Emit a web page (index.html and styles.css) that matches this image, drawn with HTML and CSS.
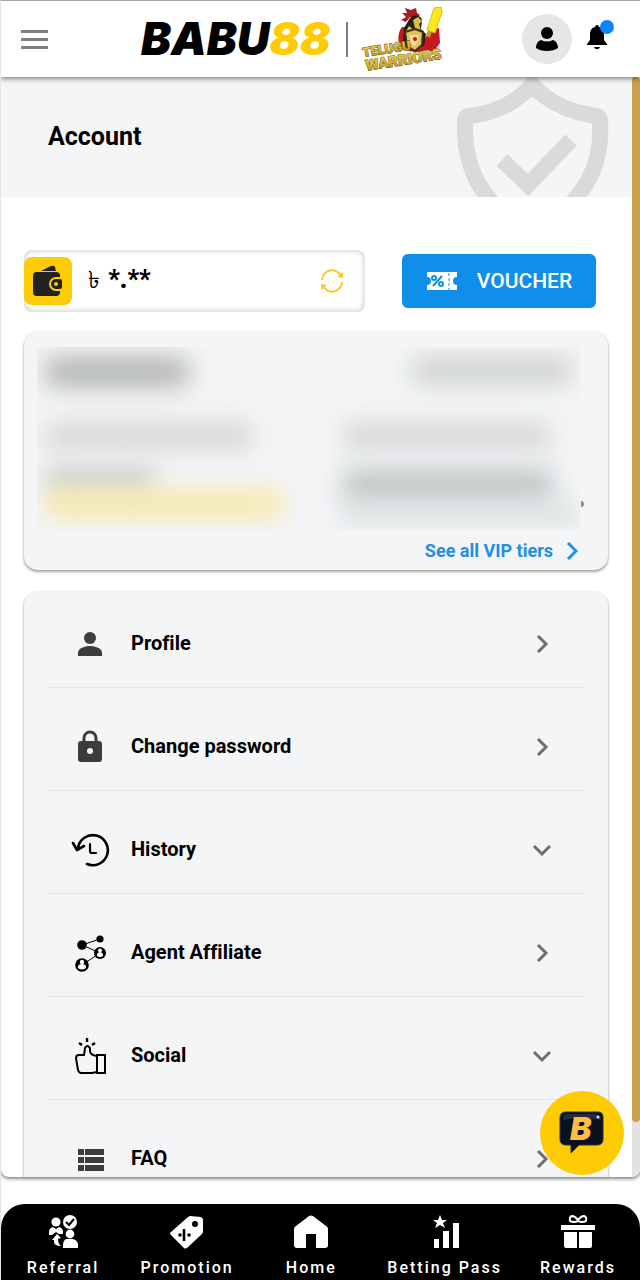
FILE: index.html
```
<!DOCTYPE html>
<html lang="en">
<head>
    <meta charset="UTF-8">
    <meta name="viewport" content="width=device-width, initial-scale=1.0">
    <title>BABU88 - Account</title>
    <link rel="stylesheet" href="styles.css">
</head>
<body>
    <div class="app">
        <header class="header">
            <button class="menu-btn" aria-label="Menu"><span></span><span></span><span></span></button>

            <a href="#" class="brand">
                <span class="brand-name">BABU<span>88</span></span>
                <span class="brand-line"></span>
                <svg class="warriors" width="92" height="70" viewBox="0 0 92 70">
                    <defs>
                        <linearGradient id="gold" x1="0" y1="0" x2="0" y2="1">
                            <stop offset="0" stop-color="#f3dc55"/>
                            <stop offset="1" stop-color="#b98a1c"/>
                        </linearGradient>
                    </defs>
                    <path d="M46 13 42 9l5 0-2-5 6 2 5-2 1 5 3 2-4 3-6-1-4 5-5-2z" fill="#a81c24"/>
                    <path d="M42 23c-5 6-5 17 1 23l12 2 19-1 6-8-1-15-7 2-7 8-5-10z" fill="#c51822"/>
                    <path d="M50 14c4-4 11-3 12 2l-1 9 5 5-2 12-14 4-7-8 1-14z" fill="#211b12"/>
                    <path d="m53 16 5-3 4 4-3 3 2 6-6-2zM49 22l5 4-8 1z" fill="#dfbd42"/>
                    <path d="m45 28 10-3 8 3-1 13-7 6-8-5z" fill="#e1c05d" stroke="#40310e" stroke-width="2"/>
                    <path d="m50 31 9 0-1 8-4 3-4-4z" fill="#f4df91"/>
                    <circle cx="55" cy="35" r="2" fill="#c51822"/>
                    <path d="m66 31 3-7 3 2-2 8z" fill="#c99a28"/>
                    <path d="m74 4 7-1 1 5-7 21-8-3z" fill="#f9e91e" stroke="#d4bd18"/>
                    <g transform="rotate(-9 5 64)" font-family="Roboto, sans-serif" font-weight="900" fill="url(#gold)" stroke="#6b551a" stroke-width="1" paint-order="stroke">
                        <text x="5" y="53" font-size="13">TELUGU</text>
                        <text x="6" y="67" font-size="15">WARRIORS</text>
                    </g>
                </svg>
            </a>

            <div class="header-actions">
                <button class="avatar" aria-label="My account">
                    <svg width="24" height="26" viewBox="0 0 24 26"><circle cx="12" cy="7" r="6"/><path d="M6 14c4 2 8 2 12 0 3 1 5 4 5 8-5 4-17 4-22 0 0-4 2-7 5-8z"/></svg>
                </button>
                <button class="bell" aria-label="Notifications">
                    <svg width="22" height="26" viewBox="0 0 22 26"><path d="M9 3a2 2 0 0 1 4 0c4 1 5 4 5 8v5l3 4v1H1v-1l3-4v-5c0-4 1-7 5-8zM8 23h6c-1 3-5 3-6 0z"/></svg>
                    <span class="bell-dot"></span>
                </button>
            </div>
        </header>

        <main class="main">
            <div class="content">
                <section class="banner">
                    <h1>Account</h1>
                    <svg class="shield" width="152" height="120" viewBox="0 0 152 120">
                        <path d="M75 8C60 25 38 36 12 39a4 4 0 0 0-4 4C6 88 20 122 75 160 130 122 146 88 143 43a4 4 0 0 0-4-4C112 35 92 26 75 8z" fill="none" stroke="#d9dadb" stroke-width="16"/>
                        <path d="m45 83 26 25 43-45" fill="none" stroke="#d9dadb" stroke-width="16"/>
                    </svg>
                </section>

                <section class="wallet-row">
                    <div class="wallet">
                        <span class="wallet-icon">
                            <svg width="32" height="32" viewBox="0 0 32 32">
                                <path d="M9 6 19 1q3-1 4 1l1 4z" fill="#222"/>
                                <rect x="1" y="7" width="27" height="24" rx="4" fill="#222"/>
                                <path d="M28 13h-4a6 6 0 0 0 0 12h4q3 0 3-3v-6q0-3-3-3z" fill="#222" stroke="#ffcb05" stroke-width="2"/>
                                <circle cx="24" cy="19" r="2" fill="#ffcb05"/>
                            </svg>
                        </span>
                        <span class="balance"><span class="currency">৳</span> *.**</span>
                        <button class="refresh" aria-label="Refresh balance">
                            <svg width="26" height="26" viewBox="0 0 26 26" fill="none" stroke="#f7cb2b" stroke-width="2"><path d="M3 12A10 10 0 0 1 22 8M23 14A10 10 0 0 1 4 18"/><path d="m24 4v6l-6-1zM2 22v-6l6 1z" fill="#f7cb2b" stroke="none"/></svg>
                        </button>
                    </div>
                    <button class="voucher">
                        <svg width="32" height="20" viewBox="0 0 32 20">
                            <path d="M1 1h30v5a4 4 0 0 0 0 8v5H1v-5a4 4 0 0 0 0-8z" fill="#fff"/>
                            <g fill="none" stroke="#0f8eea" stroke-width="2"><path d="m7 15 9-10"/><circle cx="8" cy="7" r="2"/><circle cx="15" cy="13" r="2"/><path d="M23 2v17" stroke-width="1" stroke-dasharray="3 2"/></g>
                        </svg>
                        VOUCHER
                    </button>
                </section>

                <section class="card vip">
                    <div class="vip-hidden" aria-hidden="true">
                        <div class="smudge name"></div>
                        <div class="smudge tier"></div>
                        <div class="smudge label"></div>
                        <div class="smudge label"></div>
                        <div class="progress">
                            <div class="smudge amount"></div>
                            <div class="smudge bar yellow"></div>
                        </div>
                        <div class="progress">
                            <div class="smudge amount wide"></div>
                            <div class="smudge bar"></div>
                        </div>
                    </div>
                    <span class="bar-end"></span>
                    <a href="#" class="vip-link">See all VIP tiers
                        <svg width="12" height="18" viewBox="0 0 12 18" fill="none" stroke="#1f8fe6" stroke-width="3"><path d="m2 1 8 8-8 8"/></svg>
                    </a>
                </section>

                <nav class="card menu">
                    <a href="#" class="menu-item">
                        <svg class="icon" width="40" height="40" viewBox="0 0 40 40" fill="#3c3c3c"><circle cx="20" cy="15" r="6"/><path d="M8 33v-3c0-5 7-7 12-7s12 2 12 7v3z"/></svg>
                        <span>Profile</span>
                        <svg class="arrow" width="20" height="20" viewBox="0 0 20 20"><path d="m6 3 8 8-8 8"/></svg>
                    </a>
                    <a href="#" class="menu-item">
                        <svg class="icon" width="40" height="40" viewBox="0 0 40 40"><path d="M14 17v-5a6 6 0 0 1 12 0v5" fill="none" stroke="#3c3c3c" stroke-width="3"/><rect x="8" y="15" width="24" height="21" rx="3" fill="#3c3c3c"/><circle cx="20" cy="25" r="3" fill="#f3f5f7"/></svg>
                        <span>Change password</span>
                        <svg class="arrow" width="20" height="20" viewBox="0 0 20 20"><path d="m6 3 8 8-8 8"/></svg>
                    </a>
                    <a href="#" class="menu-item">
                        <svg class="icon" width="40" height="40" viewBox="0 0 40 40" fill="none" stroke="#000" stroke-width="2.6" stroke-linecap="round" stroke-linejoin="round"><path d="M8 19A15 15 0 1 1 17 35M3 14l4 7 7-4"/><path d="M20 15v7q0 2 2 2h4" stroke-width="2.2"/></svg>
                        <span>History</span>
                        <svg class="arrow" width="20" height="20" viewBox="0 0 20 20"><path d="m2 7 8 8 8-8"/></svg>
                    </a>
                    <a href="#" class="menu-item">
                        <svg class="icon" width="40" height="40" viewBox="0 0 40 40">
                            <path d="M30 7 12 13l18 8-18 12" fill="none" stroke="#000"/>
                            <circle cx="30" cy="7" r="3.6"/><circle cx="12" cy="13" r="4.8"/><circle cx="30" cy="21" r="6"/><circle cx="12" cy="33" r="6.8"/>
                            <g fill="#fff"><circle cx="30" cy="18.5" r="2"/><path d="M27 24v-2q3-4 6 0v2q-3 2-6 0z"/><circle cx="12" cy="30" r="2.2"/><path d="M8 36v-2q1-2 4-2t4 2v2q-4 3-8 0z"/></g>
                        </svg>
                        <span>Agent Affiliate</span>
                        <svg class="arrow" width="20" height="20" viewBox="0 0 20 20"><path d="m6 3 8 8-8 8"/></svg>
                    </a>
                    <a href="#" class="menu-item">
                        <svg class="icon" width="40" height="40" viewBox="0 0 40 40" fill="none" stroke="#000" stroke-width="2" stroke-linejoin="round"><path d="M17 3v4M9 8l3 2M25 8l-3 2" stroke-width="2.4"/><path d="M27 20h8v18h-8zM27 37l-5 1H11q-2 0-3-3L6 23q0-3 3-3h5l1-7q2-4 5 0v3q0 4 7 5"/></svg>
                        <span>Social</span>
                        <svg class="arrow" width="20" height="20" viewBox="0 0 20 20"><path d="m2 7 8 8 8-8"/></svg>
                    </a>
                    <a href="#" class="menu-item">
                        <svg class="icon" width="40" height="40" viewBox="0 0 40 40" fill="#3c3c3c"><path d="M8 11h6v6H8zm7 0h19v6H15zM8 19h6v6H8zm7 0h19v6H15zM8 27h6v6H8zm7 0h19v6H15z"/></svg>
                        <span>FAQ</span>
                        <svg class="arrow" width="20" height="20" viewBox="0 0 20 20"><path d="m6 3 8 8-8 8"/></svg>
                    </a>
                </nav>
            </div>
            <div class="scroll-rail"><div class="scroll-thumb"></div></div>

            <button class="chat" aria-label="Live chat">
                <svg width="48" height="44" viewBox="0 0 48 44">
                    <path d="M8 1h32q5 0 5 5v22q0 6-6 6H21l-8 8v-8H8q-6 0-6-6V7q0-6 6-6z" fill="#0b121e" stroke="#29303a"/>
                    <path d="M9 3h29q5 1 5 6-18-4-38 0 0-5 4-6z" fill="#252d3a"/>
                    <circle cx="40" cy="6" r="1.5" fill="#d9e4ff"/>
                    <text x="12" y="29" font-family="Inter, sans-serif" font-size="32" font-weight="900" font-style="italic" fill="#ffbd45">B</text>
                </svg>
            </button>
        </main>

        <nav class="bottom-nav">
            <a href="#">
                <svg width="34" height="34" viewBox="0 0 34 34" fill="#fff"><circle cx="10" cy="7" r="4.6"/><path d="M3 20v-3q0-4 4-5l3 2 3-2q4 1 4 5v2h-4l-3-2-4 3z"/><path d="m6 25 5-6 4 4-3 1q0 5 3 7-8 0-7-6z"/><circle cx="24" cy="7" r="7"/><path d="m20 7 3 3 5-6" fill="none" stroke="#000" stroke-width="2"/><circle cx="24" cy="19" r="4.4"/><path d="M17 33v-4q1-5 4-5h6q4 1 5 5v4z"/></svg>
                Referral
            </a>
            <a href="#">
                <svg width="34" height="34" viewBox="0 0 34 34"><path d="m18 2 2-1 11 1 2 2v13l-1 2-14 13q-3 3-5 0L1 20q-2-2 0-3z" fill="#fff"/><circle cx="25" cy="9" r="3"/><path d="M14 14v12" stroke="#000" stroke-width="2.6"/><circle cx="10" cy="20" r="1.8"/><circle cx="19" cy="20" r="1.8"/></svg>
                Promotion
            </a>
            <a href="#">
                <svg width="34" height="34" viewBox="0 0 34 34"><path d="M0 14q0-2 2-3L15 1q2-1 4 0l13 10q2 1 2 3v16q0 3-3 3h-9V19H12v14H3q-3 0-3-3z" fill="#fff"/></svg>
                Home
            </a>
            <a href="#">
                <svg width="34" height="34" viewBox="0 0 34 34" fill="#fff"><path d="m12 0 2 5h5l-4 3 2 5-5-3-5 3 2-5-4-3h5zM6 24h5v9H6zM15 16h6v17h-6zM25 8h6v25h-6z"/></svg>
                Betting Pass
            </a>
            <a href="#">
                <svg width="34" height="34" viewBox="0 0 34 34" fill="#fff"><path d="M0 10h34v5H0zM3 17h13v16H5q-2 0-2-2zM18 17h13v14q0 2-2 2H18z"/><path d="M17 5q-3-4-6-4-3 1-2 5 4 2 8 0zM17 5q3-4 6-4 3 1 2 5-4 2-8 0z" fill="none" stroke="#fff" stroke-width="2"/></svg>
                Rewards
            </a>
        </nav>
    </div>
</body>
</html>
```
FILE: styles.css
```
* {
    box-sizing: border-box;
}

body {
    margin: 0;
    background: #fff;
    color: #000;
    font-family: Roboto, 'Noto Sans', sans-serif;
    font-variant-ligatures: none;
}

a {
    color: inherit;
    text-decoration: none;
}

button {
    border: none;
    padding: 0;
    background: none;
    font-family: inherit;
    cursor: pointer;
}

svg {
    display: block;
    flex-shrink: 0;
}

.app {
    display: flex;
    flex-direction: column;
    height: 100vh;
    border-top: 1px solid #a5a5a5;
    border-left: 1px solid #e6e6e6;
    overflow: hidden;
}

/* Header */
.header {
    display: flex;
    align-items: center;
    flex-shrink: 0;
    height: 76px;
    padding: 0 26px 0 20px;
    background: #fff;
    box-shadow: 0 1px 6px rgba(0, 0, 0, 0.6);
    position: relative;
    z-index: 2;
}

.menu-btn {
    display: flex;
    flex-direction: column;
    gap: 5px;
    width: 27px;
}

.menu-btn span {
    height: 3px;
    background: #808080;
}

.brand {
    display: flex;
    align-items: center;
    margin-left: 93px;
}

.brand-name {
    font-family: Inter, sans-serif;
    font-size: 45px;
    line-height: 44px;
    font-weight: 900;
    font-style: italic;
}

.brand-name span {
    color: #ffcb05;
}

.brand-line {
    width: 2px;
    height: 35px;
    margin: 0 12px 0 16px;
    background: #808080;
}

.header-actions {
    display: flex;
    align-items: center;
    gap: 14px;
    margin-left: auto;
}

.avatar {
    display: flex;
    align-items: center;
    justify-content: center;
    width: 50px;
    height: 50px;
    border-radius: 50%;
    background: #e6e6e6;
}

.bell {
    position: relative;
    padding: 0 6px 4px 0;
}

.bell-dot {
    position: absolute;
    top: -4px;
    right: 0;
    width: 14px;
    height: 14px;
    border-radius: 50%;
    background: #0a84ff;
}

/* Scrolling page */
.main {
    display: flex;
    flex: 1;
    min-height: 0;
    position: relative;
    margin-bottom: 27px;
    border-radius: 0 0 8px 8px;
    overflow: hidden;
    box-shadow: 0 1px 4px rgba(0, 0, 0, 0.7);
}

.content {
    flex: 1;
    overflow: hidden;
}

.scroll-rail {
    width: 8px;
    background: #e2e2e2;
}

.scroll-thumb {
    height: 95%;
    border-radius: 4px;
    background: #c8a24c;
}

.banner {
    display: flex;
    align-items: center;
    justify-content: space-between;
    height: 120px;
    padding: 0 23px 0 47px;
    background: #f3f5f7;
}

.banner h1 {
    margin: 0;
    font-size: 25px;
    font-weight: 700;
    line-height: 30px;
}

/* Wallet */
.wallet-row {
    display: flex;
    align-items: center;
    gap: 37px;
    padding: 53px 36px 20px 23px;
}

.wallet {
    display: flex;
    align-items: center;
    flex: 1;
    height: 62px;
    padding-right: 20px;
    border-radius: 8px;
    box-shadow: inset 0 0 6px rgba(0, 0, 0, 0.25);
}

.wallet-icon {
    display: flex;
    align-items: center;
    justify-content: center;
    width: 48px;
    height: 48px;
    border-radius: 8px;
    background: #ffcb05;
}

.balance {
    margin-left: 16px;
    font-size: 25px;
    font-weight: 900;
}

.currency {
    margin-right: 2px;
    font-family: 'Noto Sans', sans-serif;
    font-size: 24px;
    font-weight: 500;
}

.refresh {
    margin-left: auto;
}

.voucher {
    display: flex;
    align-items: center;
    justify-content: center;
    gap: 19px;
    width: 194px;
    height: 54px;
    border-radius: 6px;
    background: #0f8eea;
    color: #fff;
    font-size: 21px;
    font-weight: 500;
}

/* Cards */
.card {
    margin: 0 24px 22px 23px;
    border-radius: 14px;
    background: #f3f5f7;
    box-shadow: 0 2px 3px rgba(0, 0, 0, 0.35), 0 0 3px rgba(0, 0, 0, 0.1);
}

.vip {
    position: relative;
    height: 238px;
    padding: 15px 28px 0 13px;
}

.vip-hidden {
    display: grid;
    grid-template-columns: 1fr 1fr;
    grid-template-rows: 66px 46px 1fr;
    column-gap: 60px;
    height: 183px;
    padding: 10px 0 0 8px;
    overflow: hidden;
}

.smudge {
    height: 24px;
    border-radius: 8px;
    background: #cfd1d2;
    filter: blur(12px);
}

.smudge.name {
    width: 144px;
    height: 30px;
    background: #b2b4b4;
}

.smudge.tier {
    width: 160px;
    height: 28px;
    margin-right: 8px;
    justify-self: end;
}

.smudge.label {
    width: 208px;
    height: 26px;
    background: #d4d6d6;
}

.smudge.amount {
    width: 110px;
    height: 22px;
    background: #c8c8c0;
}

.smudge.amount.wide {
    width: 210px;
    height: 34px;
    background: #c3c6c7;
}

.smudge.bar {
    height: 20px;
    background: #dcdfe0;
}

.smudge.bar.yellow {
    height: 26px;
    background: #f6e8a4;
}

.bar-end {
    position: absolute;
    top: 169px;
    right: 24px;
    width: 3px;
    height: 6px;
    border-radius: 0 3px 3px 0;
    background: #8c8c8c;
}

.vip-link {
    display: flex;
    align-items: center;
    justify-content: flex-end;
    gap: 13px;
    margin: 10px 2px 0 0;
    color: #1f8fe6;
    font-size: 18px;
    font-weight: 700;
    line-height: 22px;
}

.menu {
    padding: 0 24px;
}

.menu-item {
    display: flex;
    align-items: center;
    height: 103px;
    padding: 14px 32px 0 22px;
    border-bottom: 1px solid #e2e4e6;
    font-size: 20px;
    font-weight: 700;
}

.menu-item:first-child {
    height: 96px;
    padding-top: 7px;
}

.menu-item span {
    flex: 1;
    margin-left: 21px;
}

.arrow {
    fill: none;
    stroke: #6e6e6e;
    stroke-width: 3;
}

.chat {
    display: flex;
    align-items: center;
    justify-content: center;
    position: absolute;
    right: 16px;
    bottom: 2px;
    width: 84px;
    height: 84px;
    border-radius: 50%;
    background: #ffcb05;
}

/* Bottom navigation */
.bottom-nav {
    display: flex;
    flex-shrink: 0;
    height: 76px;
    border-radius: 24px 24px 0 0;
    background: #000;
    color: #fff;
}

.bottom-nav a {
    display: flex;
    flex-direction: column;
    align-items: center;
    flex: 1 0 0;
    gap: 9px;
    padding: 11px 14px 0;
    font-size: 16px;
    font-weight: 500;
    line-height: 20px;
    letter-spacing: 2px;
    white-space: nowrap;
}
```
